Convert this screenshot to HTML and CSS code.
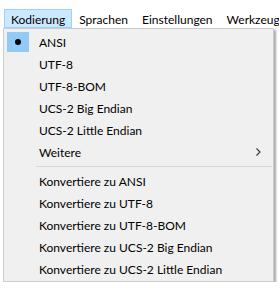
FILE: index.html
```html
<!DOCTYPE html>
<html lang="de">
<head>
    <meta charset="UTF-8">
    <title>Kodierung</title>
    <link rel="stylesheet" href="styles.css">
</head>
<body>
<div class="menubar">
    <div class="menubar-item active">Kodierung</div>
    <div class="menubar-item">Sprachen</div>
    <div class="menubar-item">Einstellungen</div>
    <div class="menubar-item">Werkzeug</div>
</div>
<div class="dropdown">
    <div class="item"><span class="check checked"><span class="dot"></span></span>ANSI</div>
    <div class="item"><span class="check"></span>UTF-8</div>
    <div class="item"><span class="check"></span>UTF-8-BOM</div>
    <div class="item"><span class="check"></span>UCS-2 Big Endian</div>
    <div class="item"><span class="check"></span>UCS-2 Little Endian</div>
    <div class="item"><span class="check"></span><span class="label">Weitere</span>
        <svg class="arrow" width="5" height="8" viewBox="0 0 5 8"><path d="M0.5 0.5 L4 4 L0.5 7.5" fill="none" stroke="#333" stroke-width="1.1"/></svg>
    </div>
    <div class="separator"></div>
    <div class="item"><span class="check"></span>Konvertiere zu ANSI</div>
    <div class="item"><span class="check"></span>Konvertiere zu UTF-8</div>
    <div class="item"><span class="check"></span>Konvertiere zu UTF-8-BOM</div>
    <div class="item"><span class="check"></span>Konvertiere zu UCS-2 Big Endian</div>
    <div class="item"><span class="check"></span>Konvertiere zu UCS-2 Little Endian</div>
</div>
</body>
</html>
```

FILE: styles.css
```css
body {
    margin: 0;
    background: #ffffff;
    font-family: Lato, 'Noto Sans', sans-serif;
    font-size: 12px;
    color: #000;
    overflow: hidden;
}

.menubar {
    display: flex;
    padding: 9px 0 0 4px;
    height: 19px;
}

.menubar-item {
    box-sizing: border-box;
    height: 19px;
    padding: 1px 6px 0;
    line-height: 17px;
    border: 1px solid transparent;
    white-space: nowrap;
}

.menubar-item.active {
    background: #cce8ff;
    border-color: #99d1ff;
}

.dropdown {
    margin-left: 3px;
    width: 267px;
    padding: 2px 0 1px 2px;
    box-sizing: content-box;
    background: #f0f0f0;
    border: 1px solid #cccccc;
    box-shadow: 2px 2px 2px rgba(0, 0, 0, 0.35);
}

.item {
    display: flex;
    align-items: center;
    height: 22px;
    white-space: nowrap;
}

.check {
    width: 22px;
    height: 20px;
    margin: 0 10px 0 1px;
    display: flex;
    align-items: center;
    justify-content: center;
}

.check.checked {
    background: #91c9f7;
}

.dot {
    width: 6px;
    height: 6px;
    border-radius: 50%;
    background: #000;
}

.label {
    flex: 1;
}

.arrow {
    margin-right: 12px;
}

.separator {
    height: 1px;
    margin: 3px 1px 3px 30px;
    background: #d7d7d7;
}
```
